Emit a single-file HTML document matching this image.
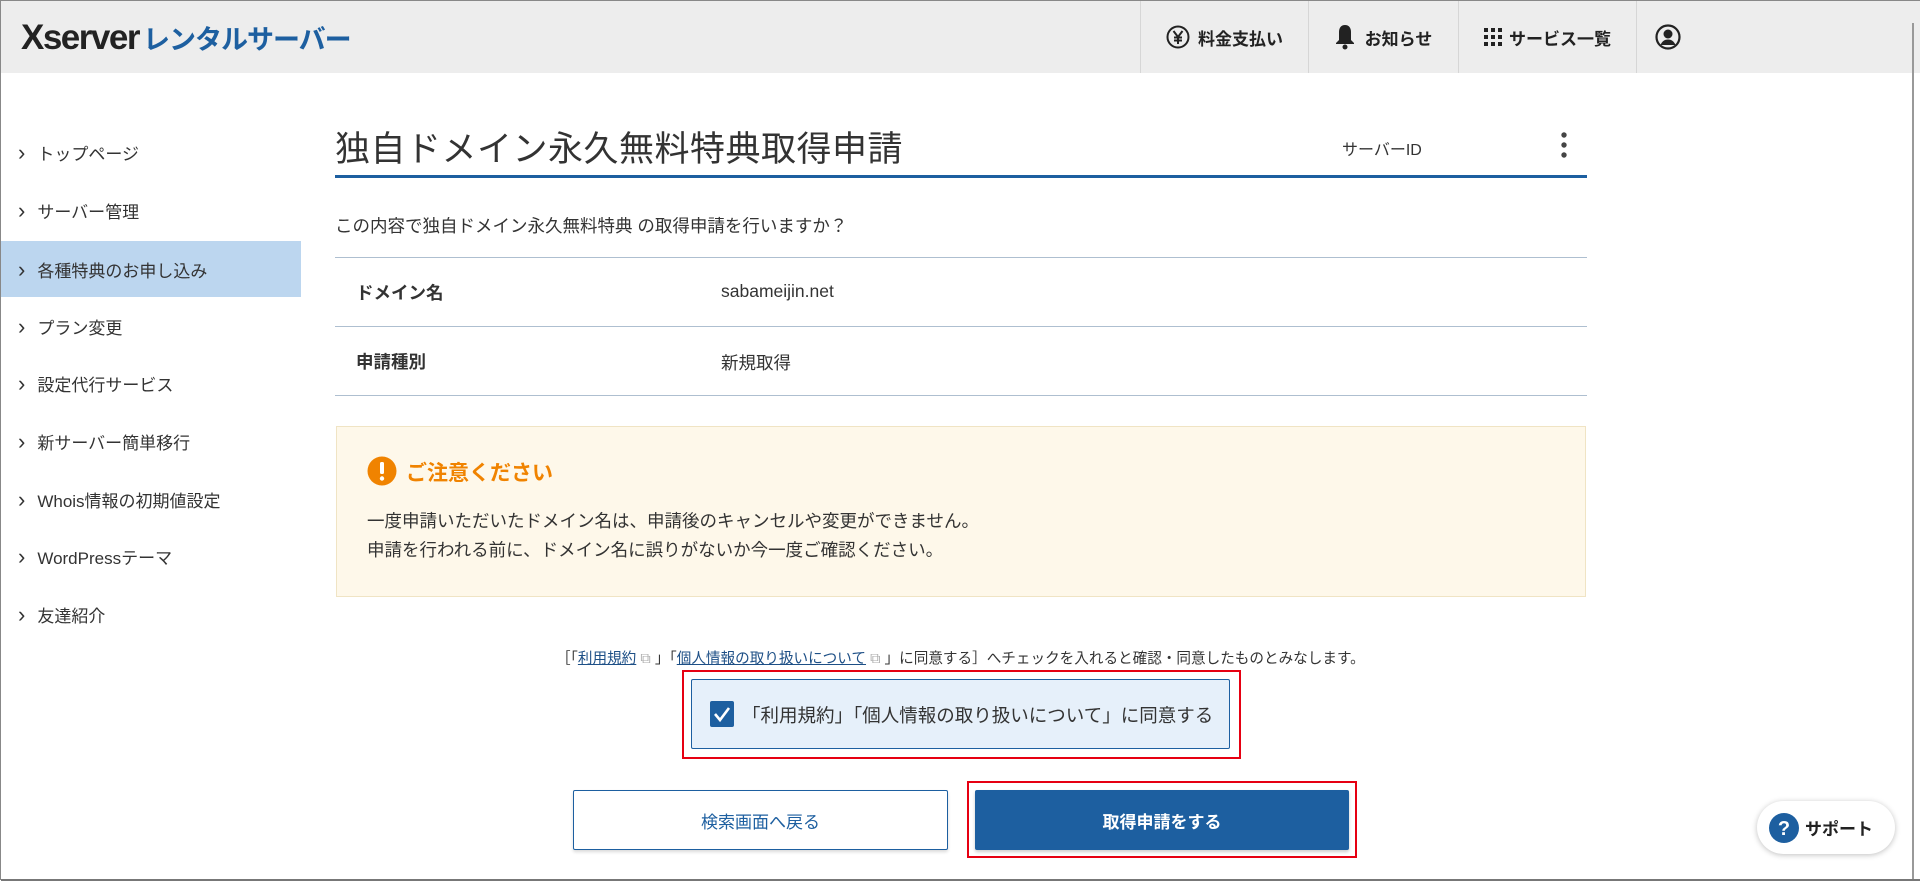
<!DOCTYPE html>
<html><head><meta charset="utf-8"><style>
*{box-sizing:border-box;margin:0;padding:0}
body{width:1920px;height:880px;overflow:hidden;background:#fff;font-family:"Liberation Sans","Noto Sans CJK JP",sans-serif;color:#333;position:relative;border:1px solid #888;border-right:none}
.hdr{position:absolute;left:0;top:0;width:1920px;height:72px;background:#ededed}
.logo{position:absolute;left:20px;top:17px;font-size:35px;font-weight:bold;color:#222;letter-spacing:-1.5px;white-space:nowrap}
.logo span{color:#1d5fa0;font-size:27px;letter-spacing:-1px;margin-left:4px;display:inline-block;transform:scaleX(1.0);transform-origin:left}
.nav{position:absolute;top:0;height:72px;display:flex;align-items:center;justify-content:center;font-size:17px;font-weight:bold;color:#222;border-left:1px solid #d6d6d6;white-space:nowrap}
.side{position:absolute;left:0;top:0}
.side div{position:absolute;left:0;width:300px;height:57px;line-height:57px;padding-left:17px;font-size:17px;color:#333}
.side div:before{content:"›";font-size:22px;margin-right:12px;position:relative;top:0px}
.side .act{background:#bcd6ef}
h1{position:absolute;left:334px;top:120px;font-size:35px;font-weight:normal;color:#333;letter-spacing:.5px}
.uline{position:absolute;left:334px;top:174px;width:1252px;height:3px;background:#1d5fa0}
.line{position:absolute;left:334px;width:1252px;height:1px;background:#aebfd0}
.t{position:absolute;font-size:17.5px;white-space:nowrap}
.notice{position:absolute;left:335px;top:425px;width:1250px;height:171px;background:#fef8ea;border:1px solid #f0e4c4}
.btn{position:absolute;top:789px;height:60px;display:flex;align-items:center;justify-content:center;font-size:17px}
</style></head><body>
<div class="hdr">
<div class="logo">Xserver<span>レンタルサーバー</span></div>
<div class="nav" style="left:1139px;width:168px"><svg width="24" height="24" viewBox="0 0 24 24" style="margin-right:8px"><circle cx="12" cy="12" r="10.5" fill="none" stroke="#222" stroke-width="2"/><path d="M7.5 6l4.5 6 4.5-6M12 12v7M8 12.5h8M8 15.5h8" stroke="#222" stroke-width="2" fill="none"/></svg>料金支払い</div>
<div class="nav" style="left:1307px;width:150px"><svg width="20" height="26" viewBox="0 0 20 26" style="margin-right:10px"><path d="M10 1c-4 0-6 3-6 7v8l-3 3v1h18v-1l-3-3V8c0-4-2-7-6-7z" fill="#222"/><circle cx="10" cy="23" r="2.5" fill="#222"/></svg>お知らせ</div>
<div class="nav" style="left:1457px;width:178px"><svg width="18" height="18" viewBox="0 0 18 18" style="margin-right:7px" fill="#222"><rect x="0" y="0" width="4" height="4"/><rect x="7" y="0" width="4" height="4"/><rect x="14" y="0" width="4" height="4"/><rect x="0" y="7" width="4" height="4"/><rect x="7" y="7" width="4" height="4"/><rect x="14" y="7" width="4" height="4"/><rect x="0" y="14" width="4" height="4"/><rect x="7" y="14" width="4" height="4"/><rect x="14" y="14" width="4" height="4"/></svg>サービス一覧</div>
<div class="nav" style="left:1635px;width:62px"><svg width="26" height="26" viewBox="0 0 26 26"><circle cx="13" cy="13" r="11.5" fill="none" stroke="#222" stroke-width="2.2"/><circle cx="13" cy="10" r="4.5" fill="#222"/><path d="M5.5 21c1.5-4 4.5-5.5 7.5-5.5s6 1.5 7.5 5.5z" fill="#222"/></svg></div>
</div>
<div style="position:absolute;left:1911px;top:22px;width:2px;height:858px;background:#999"></div>
<div class="side">
<div style="top:123px">トップページ</div>
<div style="top:181px">サーバー管理</div>
<div class="act" style="top:240px;height:56px">各種特典のお申し込み</div>
<div style="top:297px">プラン変更</div>
<div style="top:354px">設定代行サービス</div>
<div style="top:412px">新サーバー簡単移行</div>
<div style="top:470px">Whois情報の初期値設定</div>
<div style="top:527px">WordPressテーマ</div>
<div style="top:585px">友達紹介</div>
</div>
<h1>独自ドメイン永久無料特典取得申請</h1>
<div class="t" style="left:1341px;top:135px;font-size:16px">サーバーID</div>
<svg style="position:absolute;left:1559px;top:130px" width="8" height="28"><circle cx="4" cy="4" r="2.7" fill="#444"/><circle cx="4" cy="14" r="2.7" fill="#444"/><circle cx="4" cy="24" r="2.7" fill="#444"/></svg>
<div class="uline"></div>
<div class="t" style="left:334px;top:212px">この内容で独自ドメイン永久無料特典 の取得申請を行いますか？</div>
<div class="line" style="top:256px"></div>
<div class="t" style="left:355px;top:279px;font-weight:bold">ドメイン名</div>
<div class="t" style="left:720px;top:280px">sabameijin.net</div>
<div class="line" style="top:325px"></div>
<div class="t" style="left:355px;top:348px;font-weight:bold">申請種別</div>
<div class="t" style="left:720px;top:349px">新規取得</div>
<div class="line" style="top:394px"></div>
<div class="notice"></div>
<svg style="position:absolute;left:366px;top:455px" width="30" height="30"><circle cx="15" cy="15" r="14.5" fill="#f08300"/><rect x="13" y="6" width="4" height="12" rx="1.5" fill="#fff"/><circle cx="15" cy="22.5" r="2.2" fill="#fff"/></svg>
<div class="t" style="left:405px;top:456px;font-size:21px;font-weight:bold;color:#f08300">ご注意ください</div>
<div class="t" style="left:366px;top:507px">一度申請いただいたドメイン名は、申請後のキャンセルや変更ができません。</div>
<div class="t" style="left:366px;top:536px">申請を行われる前に、ドメイン名に誤りがないか今一度ご確認ください。</div>
<div class="t" style="left:555px;top:646px;font-size:14.6px;color:#333">［「<u style="color:#1d4f86">利用規約</u> <span style="color:#aaa">⧉</span> 」「<u style="color:#1d4f86">個人情報の取り扱いについて</u> <span style="color:#aaa">⧉</span> 」に同意する］へチェックを入れると確認・同意したものとみなします。</div>
<div style="position:absolute;left:681px;top:669px;width:559px;height:89px;border:2px solid #e60012"></div>
<div style="position:absolute;left:690px;top:678px;width:539px;height:70px;background:#e6f0fa;border:1px solid #1d5fa0;border-radius:2px"></div>
<svg style="position:absolute;left:709px;top:700px" width="24" height="26"><rect width="24" height="26" rx="2" fill="#1d5fa0"/><path d="M5 13l5 6 9-12" stroke="#fff" stroke-width="2.6" fill="none"/></svg>
<div class="t" style="left:741px;top:701px;font-size:18.5px;color:#333">「利用規約」「個人情報の取り扱いについて」に同意する</div>
<div class="btn" style="left:572px;width:375px;border:1px solid #1d5fa0;border-radius:2px;color:#1d5fa0;box-shadow:0 2px 3px rgba(0,0,0,.15)">検索画面へ戻る</div>
<div style="position:absolute;left:966px;top:780px;width:390px;height:77px;border:2px solid #e60012"></div>
<div class="btn" style="left:974px;width:374px;background:#1d5fa0;color:#fff;font-weight:bold;border-radius:2px;box-shadow:0 2px 3px rgba(0,0,0,.2)">取得申請をする</div>
<div style="position:absolute;left:1756px;top:800px;width:138px;height:53px;background:#fff;border-radius:27px;box-shadow:0 1px 6px rgba(0,0,0,.25);display:flex;align-items:center;padding-left:12px;font-size:17px;font-weight:bold;color:#222">
<svg width="30" height="30" style="margin-right:6px"><circle cx="15" cy="15" r="15" fill="#1d5fa0"/><text x="15" y="22" text-anchor="middle" font-size="20" font-weight="bold" fill="#fff" font-family="Liberation Sans">?</text></svg>サポート</div>
<div style="position:absolute;left:0;top:878px;width:1920px;height:2px;background:#777"></div>
</body></html>
